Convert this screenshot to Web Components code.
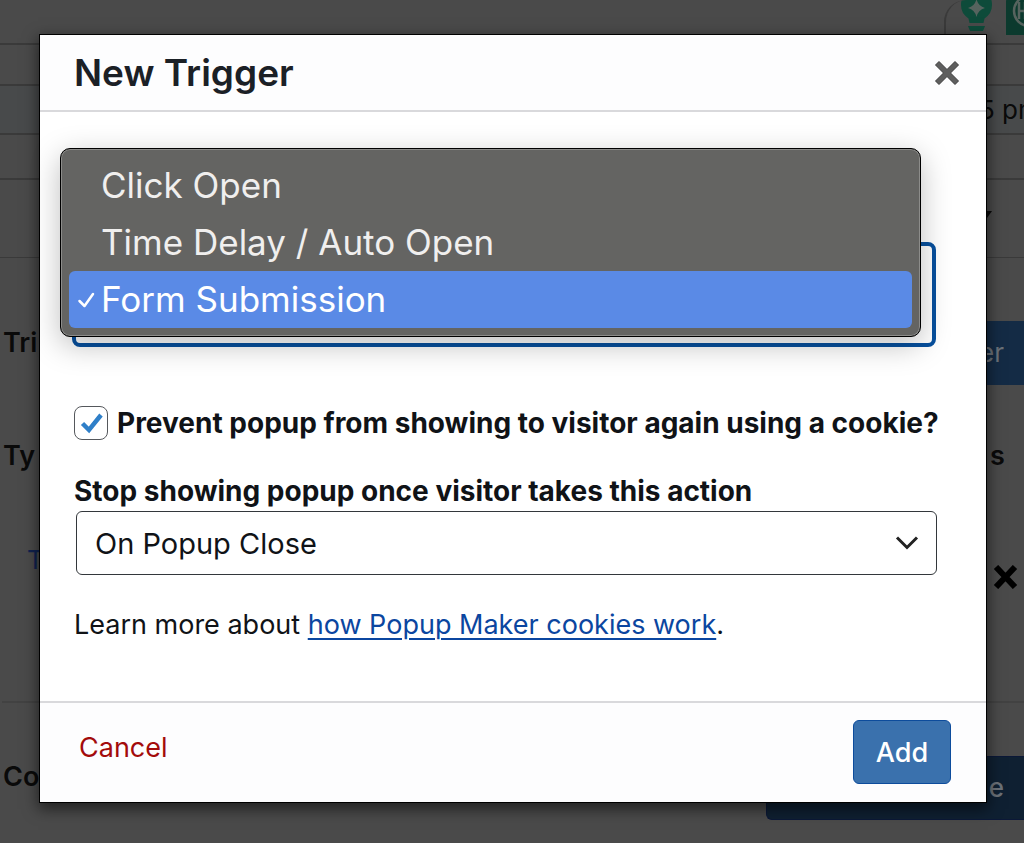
<!DOCTYPE html>
<html lang="en">
<head>
<meta charset="utf-8">
<meta name="viewport" content="width=device-width, initial-scale=1">
<title>New Trigger</title>
<style>
  html, body { margin: 0; }
  body { font-family: Inter, "Noto Sans", sans-serif; background: #4a4a4a; color: #0a0a0a; }
</style>
</head>
<body>
<trigger-screen></trigger-screen>

<script>
const define = (name, html) => customElements.define(name, class extends HTMLElement {
  constructor() {
    super();
    this.attachShadow({ mode: "open" }).innerHTML = html;
  }
});

/* Extension icons of the browser toolbar */
define("toolbar-icons", `
<style>
  :host { display: flex; gap: 14px; box-sizing: border-box; width: 80px; height: 42px; margin-left: auto; padding-left: 15px;
    border-left: 2px solid #3a3a3a; border-top-left-radius: 22px; overflow: hidden; }
  svg { flex: none; display: block; }
</style>
<svg width="31" height="36" viewBox="0 0 31 36" aria-hidden="true">
  <path d="M2-5h27Q33 6 29 13Q27 16 23.500 18.500L22.500 23H8.500L7.500 18.500Q4 16 2 13Q-2 6 2-5z" fill="#0e4b3a"/>
  <path d="M15.500 -1Q17 6 24 8Q17 10 15.500 17Q14 10 7 8Q14 6 15.500 -1z" fill="#56635e"/>
  <path d="M7 26h17l-2 5H9z" fill="#0e4b3a"/>
</svg>
<svg width="32" height="36" viewBox="0 0 32 36" aria-hidden="true">
  <path d="M6-8h26v43H0V2q0-6 6-10z" fill="#0c3a2e"/>
  <circle cx="23" cy="11" r="15" fill="none" stroke="#56635e" stroke-width="2.500"/>
  <path d="M13 2v17M19 2v17M13 11h6" stroke="#56635e" stroke-width="2.500" fill="none"/>
</svg>`);

/* One horizontal band of the page behind the dialog */
define("page-band", `
<style>
  :host { display: flex; align-items: center; justify-content: flex-end; box-sizing: border-box;
    border-bottom: 2px solid #3a3a3a; overflow: hidden; }
</style><slot></slot>`);

define("editor-page", `
<style>
  :host { display: block; font-size: 26px; line-height: 32px; }
  .b1 { height: 45px; align-items: flex-start; } .b2 { height: 41px; } .b3 { height: 49px; background: #484a4b; }
  .b4 { height: 45px; } .b5 { height: 78px; border-bottom-width: 1px; }
  .clock { width: 45px; white-space: nowrap; }
  .box { display: grid; grid-template-rows: 128px 116px 199px; }
  .box > div, .cookies { display: flex; justify-content: space-between; padding-left: 3px; }
  b { font-weight: 600; font-size: 27px; }
  .heading { padding-top: 63px; box-sizing: border-box; }
  .heading b { padding-top: 6px; }
  .cols { align-items: flex-start; padding-top: 54px; box-sizing: border-box; }
  .cols b:last-child { width: 34px; }
  .entry a { color: #10224f; text-decoration: none; padding: 42px 0 0 24px; }
  .entry svg { margin: 63px 6px 0 0; }
  button { font: inherit; color: #6b7178; background: #142b45; border: 0; height: 64px; padding: 0 20px 0 0; text-align: right; border-radius: 6px 0 0 6px; }
  .heading button { width: 60px; }
  .cookies { margin-left: 2px; padding-left: 1px; border-top: 2px solid #424242; }
  .cookies b { padding-top: 58px; }
  .cookies button { width: 258px; margin-top: 53px; background: #0f2032; border: 1px solid #0b1837; border-right: 0; font-weight: 500; }
</style>
<page-band class="b1"><toolbar-icons></toolbar-icons></page-band>
<page-band class="b2"></page-band>
<page-band class="b3"><span class="clock">5 pm</span></page-band>
<page-band class="b4"></page-band>
<page-band class="b5"><svg width="40" height="18" viewBox="0 0 40 18" aria-hidden="true"><path d="M0 1H8L3 8H0z" fill="#0a0a0a"/></svg></page-band>
<div class="box">
  <div class="heading"><b>Tri</b><button type="button">er</button></div>
  <div class="cols"><b>Ty</b><b>s</b></div>
  <div class="entry"><a href="#">T</a>
    <svg width="25" height="24" viewBox="0 0 25 24" aria-hidden="true"><path d="M3 2L22 22M22 2L3 22" stroke="#000" stroke-width="6"/></svg></div>
</div>
<div class="cookies"><b>Co</b><button type="button">e</button></div>`);

/* Dialog frame: title, body and footer come in through slots */
define("modal-dialog", `
<style>
  :host { display: block; background: #fff; box-shadow: 0 0 0 1px #000, 0 5px 14px 2px rgba(0,0,0,.55); color: #101317; }
  header, footer { display: flex; justify-content: space-between; background: #fdfdfe; box-sizing: border-box; }
  header { height: 77px; align-items: center; padding: 0 25px 0 34px; border-bottom: 2px solid #d9d9dc; }
  footer { align-items: flex-start; padding: 17px 35px 18px 39px; border-top: 2px solid #d9d9dc; }
  .close { display: block; border: 0; background: none; padding: 0; width: 28px; height: 28px; }
  .close svg { display: block; }
</style>
<header><slot name="title"></slot>
  <button class="close" type="button" aria-label="Close"><svg width="28" height="28" viewBox="0 0 28 28"><path d="M2.500 6L6 2.500L14 10.500L22 2.500L25.500 6L17.500 14L25.500 22L22 25.500L14 17.500L6 25.500L2.500 22L10.500 14z" fill="#5e5e5e" stroke="#3a3a3a" stroke-width="1"/></svg></button>
</header>
<slot></slot>
<footer><slot name="actions"></slot></footer>`);

/* Choice in the open menu */
define("menu-option", `
<style>
  :host { display: grid; grid-template-columns: 32px 1fr; align-items: center; height: 57px; border-radius: 6px;
    color: #f0efee; font-size: 35px; line-height: 54px; }
  span { padding-bottom: 2px; }
  :host([aria-selected="true"]) { background: #5a8ae6; color: #fff; }
  svg { visibility: hidden; margin-left: 8px; }
  :host([aria-selected="true"]) svg { visibility: visible; }
</style>
<svg width="19" height="20" viewBox="0 0 19 20" aria-hidden="true"><path d="M2.500 11L7.500 16L16 4" fill="none" stroke="#fff" stroke-width="2.500" stroke-linecap="round" stroke-linejoin="round"/></svg>
<span><slot></slot></span>`);

define("trigger-select", `
<style>
  :host { display: block; position: relative; }
  select { appearance: none; display: block; box-sizing: border-box; width: 100%; height: 105px; padding: 0 30px; margin: 0;
    font: inherit; font-size: 28px; color: #101317; background: #fff; border: 4px solid #07509e; border-radius: 8px; outline: 0; }
  .menu { position: absolute; left: -12px; right: 15px; bottom: 10px; box-sizing: border-box; padding: 8px;
    background: #646462; border: 1px solid #000; border-radius: 10px; box-shadow: inset 0 0 0 1px #8c8c8a, 0 8px 30px rgba(0,0,0,.26); }
</style>
<select aria-label="Trigger"><option>Form Submission</option></select>
<div class="menu" role="listbox" aria-label="Trigger">
  <menu-option role="option">Click Open</menu-option>
  <menu-option role="option">Time Delay / Auto Open</menu-option>
  <menu-option role="option" aria-selected="true">Form Submission</menu-option>
</div>`);

define("cookie-check", `
<style>
  :host { display: block; }
  label { display: flex; align-items: center; gap: 9px; font-size: 28px; font-weight: 700; line-height: 34px; white-space: nowrap; }
  input { appearance: none; flex: none; width: 34px; height: 34px; margin: 0; border: 1px solid #55585c; border-radius: 8px;
    background: #fff url("data:image/svg+xml,%3Csvg xmlns='http://www.w3.org/2000/svg' viewBox='0 0 32 32'%3E%3Cpath d='M7.500 16.500L14 23L26 8' fill='none' stroke='%232f7fc8' stroke-width='4.500'/%3E%3C/svg%3E") center/32px no-repeat; }
</style>
<label><input type="checkbox" checked><span><slot></slot></span></label>`);

define("action-select", `
<style>
  :host { display: block; }
  label { display: block; font-size: 28px; font-weight: 700; line-height: 36px; white-space: nowrap; }
  select { appearance: none; display: block; box-sizing: border-box; width: calc(100% - 2px); height: 64px; margin: 2px 0 0 2px; padding: 0 60px 0 18px;
    font: inherit; font-size: 29px; color: #101317; border: 1px solid #33373b; border-radius: 6px;
    background: #fff url("data:image/svg+xml,%3Csvg xmlns='http://www.w3.org/2000/svg' viewBox='0 0 24 16'%3E%3Cpath d='M2 2.500L12 12.500L22 2.500' fill='none' stroke='%23222' stroke-width='3'/%3E%3C/svg%3E") right 17px center/24px 16px no-repeat; }
</style>
<label for="action"><slot></slot></label>
<select id="action"><option>On Popup Close</option></select>`);

define("trigger-form", `
<style>
  :host { display: block; padding: 130px 49px 58px 34px; }
  trigger-select { margin: 0 1px 59px -2px; }
  action-select { margin-top: 33px; }
  p { margin: 32px 0 0; font-size: 27px; line-height: 36px; }
  a { color: #0b46a0; text-decoration-thickness: 2px; text-underline-offset: 4px; }
</style>
<trigger-select></trigger-select>
<cookie-check>Prevent popup from showing to visitor again using a cookie?</cookie-check>
<action-select>Stop showing popup once visitor takes this action</action-select>
<p>Learn more about <a href="#">how Popup Maker cookies work</a>.</p>`);

define("trigger-screen", `
<style>
  :host { display: block; position: relative; min-height: 100vh; overflow: hidden; }
  .overlay { position: absolute; inset: 0; padding: 35px 38px 0 40px; }
  h1 { margin: 0; font-size: 37px; line-height: 48px; font-weight: 600; color: #1b2026; }
  .cancel { border: 0; background: none; padding: 0; font: inherit; font-size: 27px; line-height: 56px; color: #a30b0b; }
  .add { box-sizing: border-box; width: 98px; height: 64px; border: 1px solid #0d4c9c; border-radius: 6px; background: #3a71ad; color: #fff;
    font: inherit; font-size: 27px; font-weight: 500; padding: 0; }
</style>
<editor-page></editor-page>
<div class="overlay">
  <modal-dialog role="dialog" aria-label="New Trigger">
    <h1 slot="title">New Trigger</h1>
    <trigger-form></trigger-form>
    <button slot="actions" class="cancel" type="button">Cancel</button>
    <button slot="actions" class="add" type="button">Add</button>
  </modal-dialog>
</div>`);
</script>
</body>
</html>
